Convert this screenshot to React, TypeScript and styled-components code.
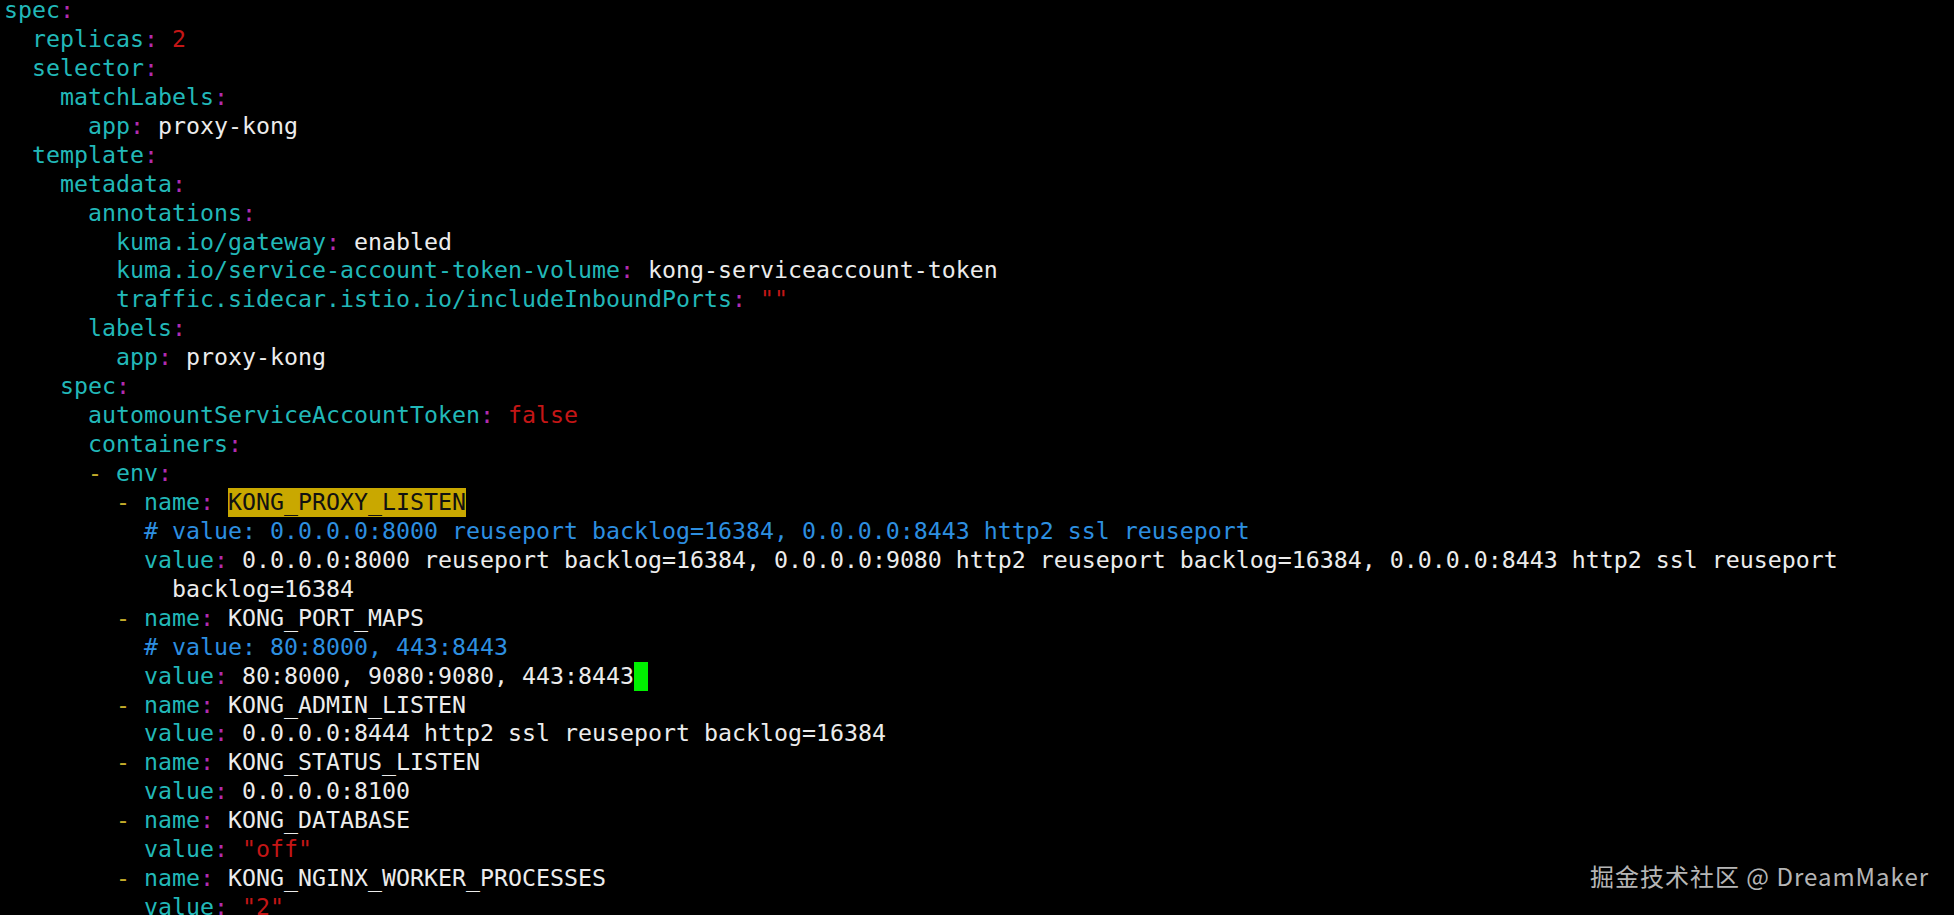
import React from "react";
import styled, { createGlobalStyle } from "styled-components";

const Global = createGlobalStyle`
  html, body {
    margin: 0;
    padding: 0;
    background: #000;
    overflow: hidden;
  }
  #root { height: 915px; }
`;

const Screen = styled.div`
  position: relative;
  width: 1954px;
  height: 915px;
  background: #000;
  overflow: hidden;
`;

const Editor = styled.div`
  display: flex;
  flex-direction: column;
  margin-top: -4px;
  padding-left: 4px;
  font-family: "DejaVu Sans Mono", "Liberation Mono", monospace;
  font-size: 23.25px;
  color: #ececec;
`;

const Line = styled.div`
  height: 28.95px;
  line-height: 28.95px;
  white-space: pre;
`;

const Key = styled.span`color: #22b8b8;`;
const Colon = styled.span`color: #b02cb0;`;
const Plain = styled.span`color: #ececec;`;
const Red = styled.span`color: #c41616;`;
const Comment = styled.span`color: #2d8fe0;`;
const Dash = styled.span`color: #c4ac2a;`;
const Highlight = styled.span`
  display: inline-block;
  height: 28.95px;
  vertical-align: top;
  background: #c9a800;
  color: #111;
`;
const Cursor = styled.span`
  display: inline-block;
  width: 1ch;
  height: 28.95px;
  vertical-align: top;
  background: #00f000;
`;

const Watermark = styled.div`
  position: absolute;
  right: 25px;
  top: 860px;
  font-family: "Noto Sans CJK SC", "Noto Sans", sans-serif;
  font-size: 24px;
  letter-spacing: 1px;
  line-height: 32px;
  color: rgba(225, 225, 225, 0.82);
  white-space: pre;
`;

type Tok = [string, string];

const kv = (indent: number, key: string, val?: Tok): Tok[] => {
  const t: Tok[] = [["p", " ".repeat(indent)], ["k", key], ["c", ":"]];
  if (val) {
    t.push(["p", " "]);
    t.push(val);
  }
  return t;
};

const item = (indent: number, key: string, val?: Tok): Tok[] => {
  const t: Tok[] = [["p", " ".repeat(indent)], ["d", "-"], ["p", " "], ["k", key], ["c", ":"]];
  if (val) {
    t.push(["p", " "]);
    t.push(val);
  }
  return t;
};

const lines: Tok[][] = [
  kv(0, "spec"),
  kv(2, "replicas", ["n", "2"]),
  kv(2, "selector"),
  kv(4, "matchLabels"),
  kv(6, "app", ["v", "proxy-kong"]),
  kv(2, "template"),
  kv(4, "metadata"),
  kv(6, "annotations"),
  kv(8, "kuma.io/gateway", ["v", "enabled"]),
  kv(8, "kuma.io/service-account-token-volume", ["v", "kong-serviceaccount-token"]),
  kv(8, "traffic.sidecar.istio.io/includeInboundPorts", ["n", '""']),
  kv(6, "labels"),
  kv(8, "app", ["v", "proxy-kong"]),
  kv(4, "spec"),
  kv(6, "automountServiceAccountToken", ["n", "false"]),
  kv(6, "containers"),
  item(6, "env"),
  item(8, "name", ["h", "KONG_PROXY_LISTEN"]),
  [["p", " ".repeat(10)], ["cm", "# value: 0.0.0.0:8000 reuseport backlog=16384, 0.0.0.0:8443 http2 ssl reuseport"]],
  kv(10, "value", [
    "v",
    "0.0.0.0:8000 reuseport backlog=16384, 0.0.0.0:9080 http2 reuseport backlog=16384, 0.0.0.0:8443 http2 ssl reuseport",
  ]),
  [["p", " ".repeat(12)], ["v", "backlog=16384"]],
  item(8, "name", ["v", "KONG_PORT_MAPS"]),
  [["p", " ".repeat(10)], ["cm", "# value: 80:8000, 443:8443"]],
  [...kv(10, "value", ["v", "80:8000, 9080:9080, 443:8443"]), ["cur", " "]],
  item(8, "name", ["v", "KONG_ADMIN_LISTEN"]),
  kv(10, "value", ["v", "0.0.0.0:8444 http2 ssl reuseport backlog=16384"]),
  item(8, "name", ["v", "KONG_STATUS_LISTEN"]),
  kv(10, "value", ["v", "0.0.0.0:8100"]),
  item(8, "name", ["v", "KONG_DATABASE"]),
  kv(10, "value", ["n", '"off"']),
  item(8, "name", ["v", "KONG_NGINX_WORKER_PROCESSES"]),
  kv(10, "value", ["n", '"2"']),
];

const renderTok = ([type, text]: Tok, i: number) => {
  switch (type) {
    case "k":
      return <Key key={i}>{text}</Key>;
    case "c":
      return <Colon key={i}>{text}</Colon>;
    case "n":
      return <Red key={i}>{text}</Red>;
    case "cm":
      return <Comment key={i}>{text}</Comment>;
    case "d":
      return <Dash key={i}>{text}</Dash>;
    case "h":
      return <Highlight key={i}>{text}</Highlight>;
    case "cur":
      return <Cursor key={i} />;
    default:
      return <Plain key={i}>{text}</Plain>;
  }
};

export default function App() {
  return (
    <Screen>
      <Global />
      <Editor>
        {lines.map((toks, i) => (
          <Line key={i}>{toks.map(renderTok)}</Line>
        ))}
      </Editor>
      <Watermark>掘金技术社区 @ DreamMaker</Watermark>
    </Screen>
  );
}
